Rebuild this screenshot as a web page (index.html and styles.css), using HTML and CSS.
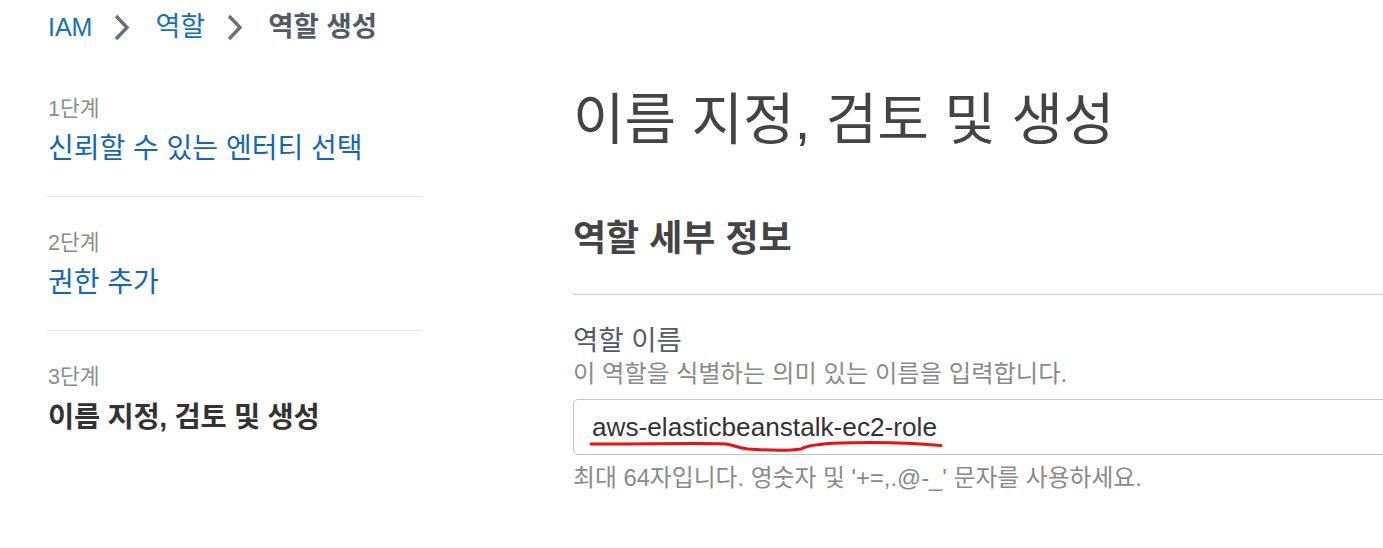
FILE: index.html
```html
<!DOCTYPE html>
<html lang="ko">
<head>
<meta charset="utf-8">
<title>역할 생성</title>
<link rel="stylesheet" href="styles.css">
</head>
<body>
<nav class="breadcrumb">
  <a class="crumb-link crumb-iam" href="#">IAM</a>
  <svg class="chev" viewBox="0 0 16 27" width="16" height="27"><path d="M2 2 L13 13.5 L2 25" fill="none" stroke="#687078" stroke-width="3.4"/></svg>
  <a class="crumb-link crumb-ko" href="#">역할</a>
  <svg class="chev" viewBox="0 0 16 27" width="16" height="27"><path d="M2 2 L13 13.5 L2 25" fill="none" stroke="#687078" stroke-width="3.4"/></svg>
  <span class="crumb-current">역할 생성</span>
</nav>
<div class="layout">
  <aside class="steps">
    <div class="step">
      <div class="step-label">1단계</div>
      <a class="step-title step-link" href="#">신뢰할 수 있는 엔터티 선택</a>
    </div>
    <div class="step">
      <div class="step-label">2단계</div>
      <a class="step-title step-link" href="#">권한 추가</a>
    </div>
    <div class="step step-last">
      <div class="step-label">3단계</div>
      <div class="step-title step-active">이름 지정, 검토 및 생성</div>
    </div>
  </aside>
  <main class="main">
    <h1 class="page-title">이름 지정, 검토 및 생성</h1>
    <section class="panel">
      <h2 class="panel-title">역할 세부 정보</h2>
      <div class="field">
        <div class="field-label">역할 이름</div>
        <div class="field-desc">이 역할을 식별하는 의미 있는 이름을 입력합니다.</div>
        <div class="input-wrap">
          <div class="input">aws-elasticbeanstalk-ec2-role</div>
          <svg class="scribble" viewBox="0 0 400 60" width="400" height="60"><path d="M18 45 C 80 45, 135 44, 153 45 C 160 46, 165 49, 175 50 C 190 51, 215 52, 228 50 C 233 47, 242 45, 267 44 C 300 43, 340 44, 368 46.5" fill="none" stroke="#ee0f0f" stroke-width="3" stroke-linecap="round"/></svg>
        </div>
        <div class="field-hint">최대 64자입니다. 영숫자 및 '+=,.@-_' 문자를 사용하세요.</div>
      </div>
    </section>
  </main>
</div>
</body>
</html>
```

FILE: styles.css
```css
html, body {
  margin: 0;
  padding: 0;
  background: #ffffff;
  overflow: hidden;
}

body {
  font-family: "Liberation Sans", "Noto Sans CJK KR", sans-serif;
  color: #333333;
  width: 1383px;
  height: 548px;
}

a {
  text-decoration: none;
}

.breadcrumb {
  display: flex;
  align-items: center;
  padding: 10px 0 0 48px;
  height: 34px;
  font-size: 27px;
  line-height: 34px;
}

.crumb-link {
  color: #0f72c0;
}

.crumb-iam {
  font-size: 25px;
}

.chev {
  display: block;
  margin: 0 25px 0 22px;
}

.crumb-current {
  color: #545b64;
  font-weight: bold;
  font-size: 27.5px;
}

.layout {
  display: flex;
  margin-top: 19px;
  padding-left: 47px;
  gap: 151px;
}

.steps {
  width: 375px;
  flex-shrink: 0;
}

.step {
  padding: 30px 0 29px 1px;
  border-bottom: 1px solid #e3e3e3;
}

.step-last {
  border-bottom: none;
}

.step-label {
  font-size: 21.5px;
  line-height: 32px;
  color: #8d8d8d;
}

.step-title {
  display: block;
  margin-top: 6px;
  font-size: 28px;
  line-height: 36px;
}

.step-link {
  color: #1166bb;
}

.step-active {
  color: #333333;
  font-weight: bold;
  font-size: 28.5px;
  letter-spacing: -0.3px;
}

.main {
  width: 900px;
  flex-shrink: 0;
}

.page-title {
  margin: 25px 0 0 0;
  font-size: 56px;
  line-height: 64px;
  font-weight: normal;
  color: #444444;
}

.panel-title {
  margin: 65px 0 0 0;
  padding-bottom: 33px;
  border-bottom: 1px solid #cfcfcf;
  font-size: 36px;
  line-height: 44px;
  font-weight: bold;
  color: #444444;
}

.field {
  padding-top: 30px;
}

.field-label {
  font-size: 27.5px;
  line-height: 32px;
  color: #545b64;
}

.field-desc {
  margin-top: 3px;
  font-size: 24.3px;
  line-height: 28px;
  color: #8a8a8a;
}

.input-wrap {
  position: relative;
  margin-top: 11px;
}

.input {
  height: 54px;
  border: 1px solid #c4c4c4;
  border-radius: 5px;
  padding: 0 18px;
  font-size: 26.2px;
  line-height: 54px;
  color: #333333;
}

.scribble {
  position: absolute;
  left: 0;
  top: 0;
}

.field-hint {
  margin-top: 8px;
  font-size: 23.8px;
  line-height: 30px;
  color: #8a8a8a;
}
```
